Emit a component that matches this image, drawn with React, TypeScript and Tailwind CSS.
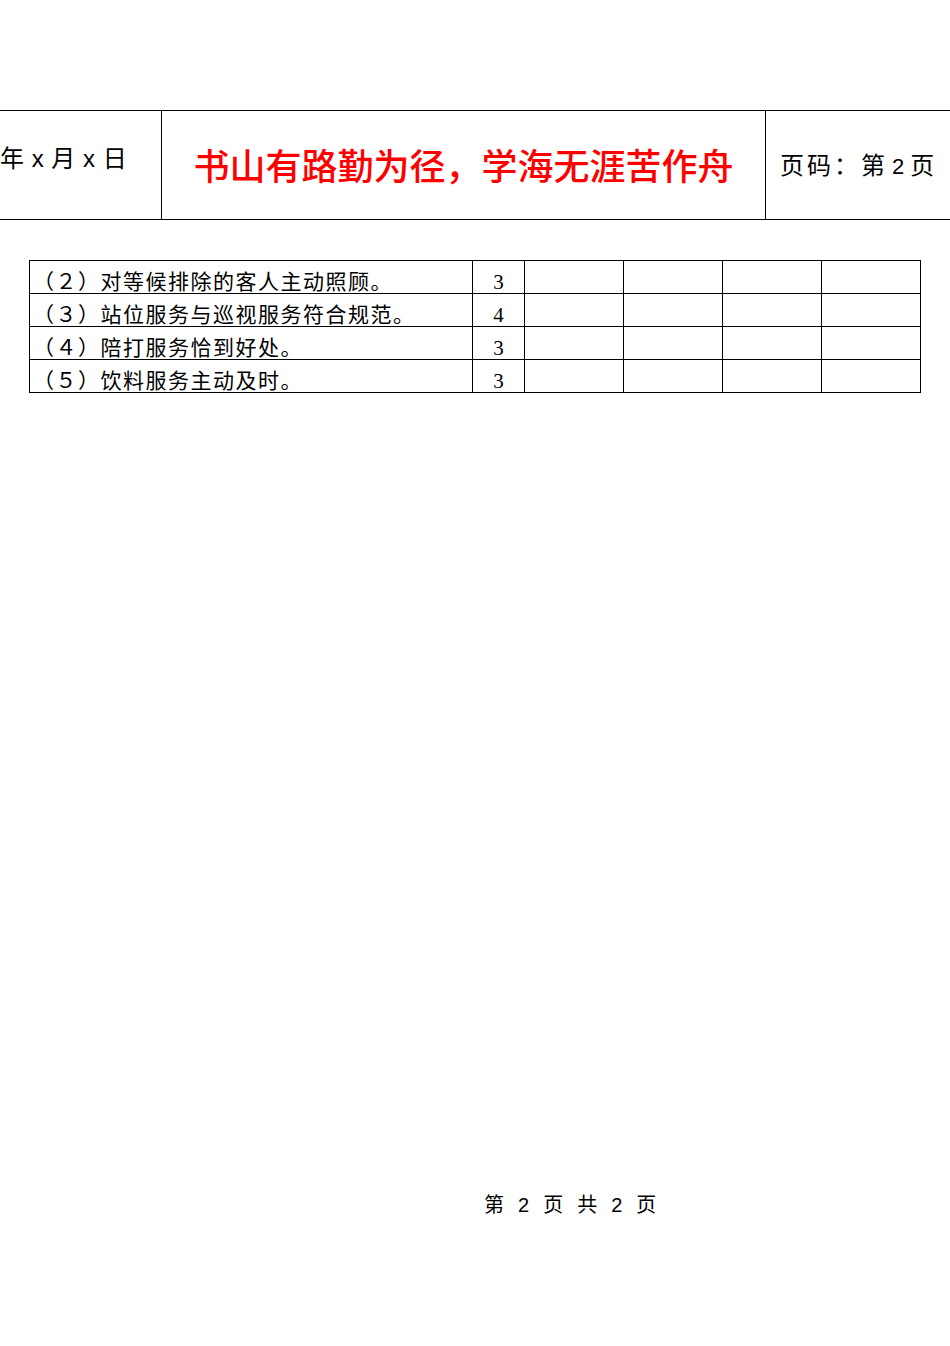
const rows = [
  { text: '（２）对等候排除的客人主动照顾。', score: '3' },
  { text: '（３）站位服务与巡视服务符合规范。', score: '4' },
  { text: '（４）陪打服务恰到好处。', score: '3' },
  { text: '（５）饮料服务主动及时。', score: '3' },
];

const sans = "font-['Liberation_Sans','Noto_Sans_CJK_SC',sans-serif]";
const serif = "font-['Liberation_Serif','Noto_Sans_CJK_SC',serif]";

export default function App() {
  return (
    <div className={`w-[950px] h-[1346px] bg-white text-black overflow-hidden ${sans}`}>
      {/* Header band */}
      <div className="mt-[110px] flex h-[110px] border-y border-black">
        <div className="w-[162px] shrink-0 border-r border-black pt-[35px] text-[24px] leading-[26px] tracking-[0.5px] whitespace-nowrap">
          年 x 月 x 日
        </div>
        <div className="w-[604px] shrink-0 border-r border-black flex items-center justify-center pt-[6px] text-[36px] font-medium text-[#ff0000] whitespace-nowrap">
          书山有路勤为径，学海无涯苦作舟
        </div>
        <div className="flex-1 flex items-baseline pl-[14px] pt-[42px] text-[24px] leading-[26px] whitespace-nowrap">
          <span className="tracking-[3px]">页码：第</span>
          <span className="ml-[4px] mr-[6px] text-[22px]">2</span>
          <span>页</span>
        </div>
      </div>

      {/* Score table */}
      <table className="ml-[29px] mt-[40px] border-collapse">
        <tbody>
          {rows.map((r, i) => (
            <tr key={i} className="h-[33px]">
              <td className="w-[443px] border border-black pl-[3px] pt-[10px] pb-0 align-bottom text-[21px] leading-[22px] tracking-[1.5px] whitespace-nowrap">
                {r.text}
              </td>
              <td className={`w-[52px] border border-black text-center align-bottom pt-[10px] text-[21px] leading-[22px] ${serif}`}>
                {r.score}
              </td>
              <td className="w-[99px] border border-black"></td>
              <td className="w-[99px] border border-black"></td>
              <td className="w-[99px] border border-black"></td>
              <td className="w-[99px] border border-black"></td>
            </tr>
          ))}
        </tbody>
      </table>

      {/* Footer */}
      <div className="mt-[800px] ml-[484px] flex gap-[14px] text-[20px] leading-[24px]">
        <span>第</span>
        <span>2</span>
        <span>页</span>
        <span>共</span>
        <span>2</span>
        <span>页</span>
      </div>
    </div>
  );
}
